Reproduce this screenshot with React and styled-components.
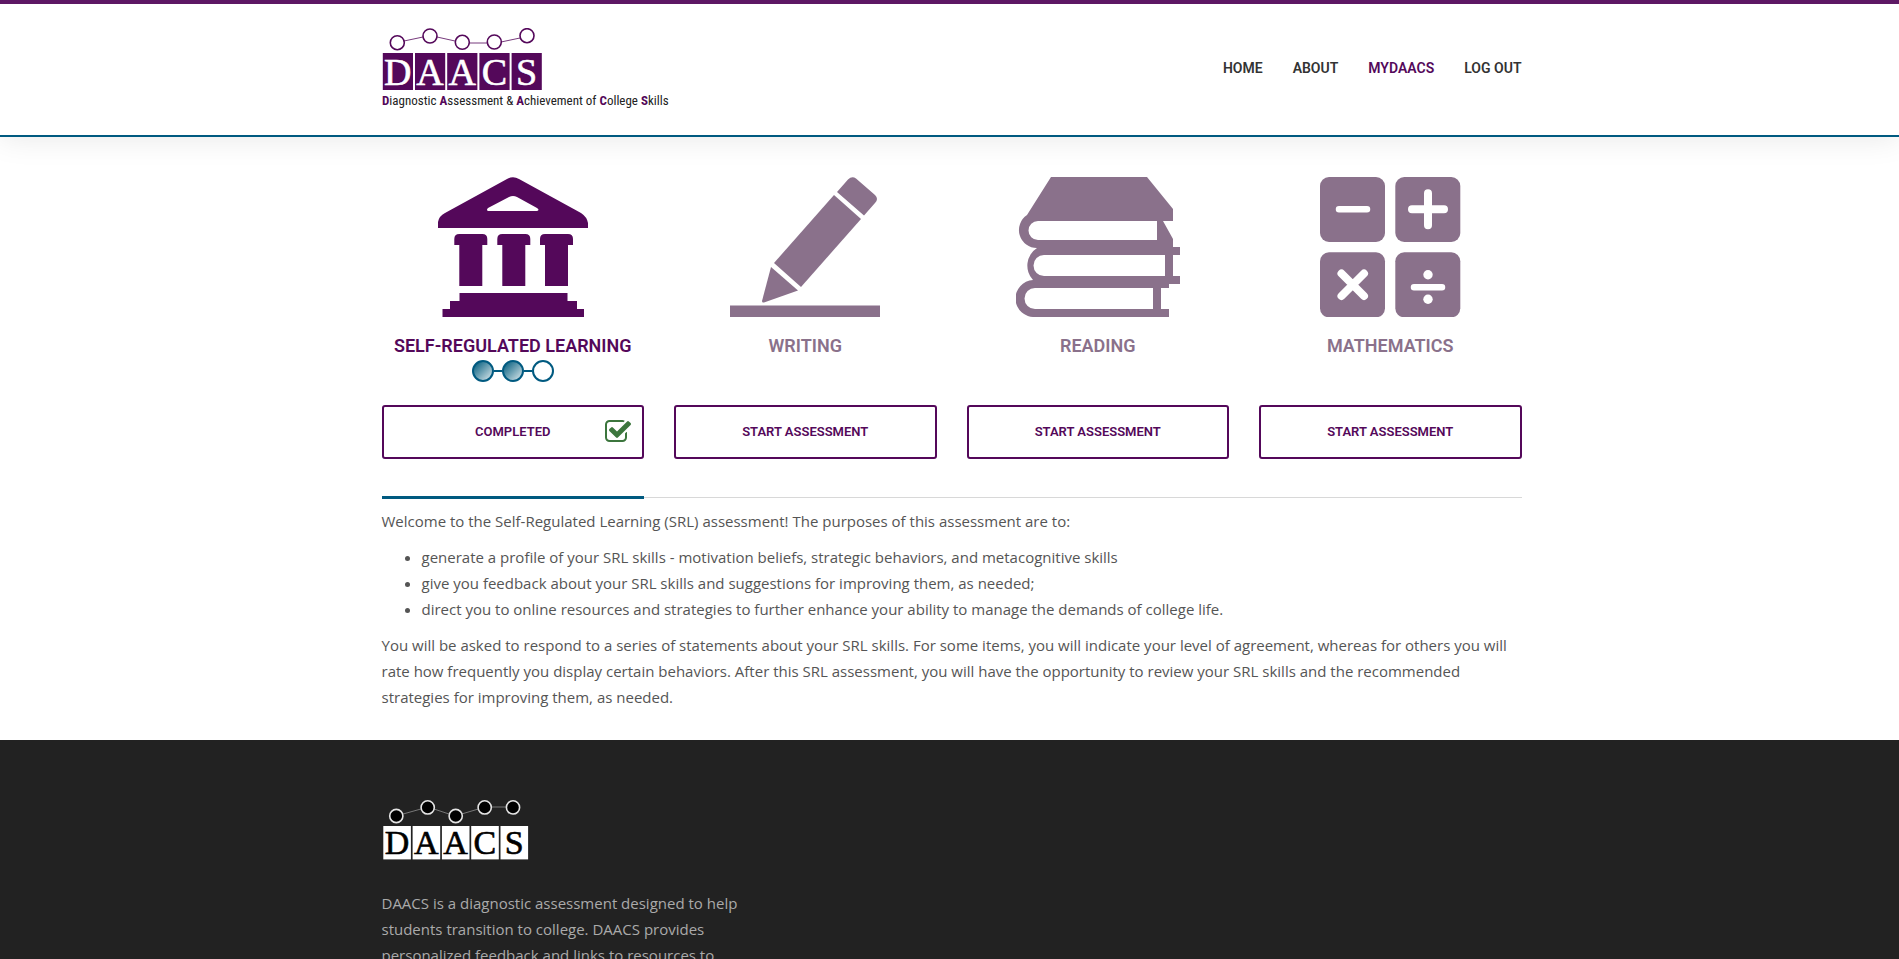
import React from 'react';
import styled, { createGlobalStyle } from 'styled-components';

const purple = '#54085a';
const muted = '#8a718b';
const teal = '#005a80';

const GlobalStyle = createGlobalStyle`
  * { box-sizing: border-box; }
  body {
    margin: 0;
    background: #fff;
    color: #555;
    font: 15px/26px "Open Sans", sans-serif;
  }
`;

const Page = styled.div`
  min-height: 100vh;
  display: flex;
  flex-direction: column;
`;

const Container = styled.div`
  width: 100%;
  max-width: 1140px;
  margin: 0 auto;
`;

const Header = styled.header`
  padding: 24px 10px 0 14px;
  border-top: 4px solid #5d1864;
  border-bottom: 2px solid ${teal};
  box-shadow: 0 0 30px rgba(0, 0, 0, 0.1);
`;

const HeaderRow = styled(Container)`
  display: flex;
  justify-content: space-between;
  align-items: flex-start;
  min-height: 107px;
`;

const HomeLink = styled.a`
  display: block;
  line-height: 0;
`;

const Nav = styled.nav`
  display: flex;
  flex-wrap: wrap;
  gap: 30px;
  padding-top: 27px;
`;

const NavLink = styled.a`
  font: 600 14px/26px Roboto, sans-serif;
  color: ${(p) => (p.$active ? purple : '#333')};
  text-transform: uppercase;
  text-decoration: none;
`;

const Main = styled.main`
  padding: 40px 10px 30px 14px;
`;

const Assessments = styled.div`
  display: grid;
  grid-template-columns: repeat(4, 1fr);
  gap: 30px;
`;

const Card = styled.section`
  display: flex;
  flex-direction: column;
  align-items: center;
  color: ${(p) => (p.$active ? purple : muted)};
`;

const Title = styled.h2`
  margin: 16px 0 0;
  font: 600 18px/26px Roboto, sans-serif;
  text-transform: uppercase;
  white-space: nowrap;
`;

const Progress = styled.div`
  height: 24px;
  padding-top: 1px;
  line-height: 0;
`;

const Action = styled.button`
  display: grid;
  grid-template-columns: 1fr auto 1fr;
  align-items: center;
  width: 100%;
  height: 54px;
  margin-top: 22px;
  padding: 0 10px;
  background: #fff;
  border: 2px solid ${purple};
  border-radius: 3px;
  color: ${purple};
  font: 600 13px/20px Roboto, sans-serif;
  text-transform: uppercase;
  cursor: pointer;
`;

const ActionLabel = styled.span`
  grid-column: 2;
`;

const CheckIcon = styled.svg`
  justify-self: end;
`;

const Track = styled.div`
  display: flex;
  align-items: center;
  height: 3px;
  margin-top: 37px;
`;

const TrackActive = styled.div`
  width: calc((100% - 90px) / 4);
  height: 3px;
  background: ${teal};
`;

const TrackRest = styled.div`
  flex: 1;
  height: 1px;
  background: #d8d8d8;
`;

const Intro = styled.div`
  padding-top: 9px;
`;

const Paragraph = styled.p`
  margin: 0 0 10px;
  &:last-child { margin-bottom: 0; }
`;

const Purposes = styled.ul`
  margin: 0 0 10px;
  padding-left: 40px;
`;

const Footer = styled.footer`
  flex: 1;
  padding: 60px 10px 60px 14px;
  background: #222;
  color: #aaa;
`;

const About = styled.div`
  max-width: 360px;
`;

const FooterText = styled.p`
  margin: 30px 0 0;
`;

const Letter = styled.text`
  font: 38px "Liberation Serif", serif;
  text-anchor: middle;
  stroke-width: 0.6px;
`;

const FooterLetter = styled(Letter)`
  font-size: 34px;
`;

const Tagline = styled.text`
  font: 13px "Liberation Sans Narrow", "Roboto Condensed", sans-serif;
  fill: #222;
`;

const Initial = styled.tspan`
  font-weight: 700;
  fill: ${purple};
`;

const HeaderLogo = () => (
  <svg width="300" height="84" viewBox="0 0 300 84" role="img" aria-label="DAACS">
    <path d="M22 13l19-4M55 9l18 4M87 15h18M119 14l19-4" stroke={purple} strokeWidth="0.8" />
    <g fill="#fff" stroke={purple} strokeWidth="1.6">
      <circle cx="15.3" cy="14.7" r="7" />
      <circle cx="48" cy="8" r="7" />
      <circle cx="80.3" cy="14.3" r="7" />
      <circle cx="112.3" cy="14" r="7" />
      <circle cx="145" cy="7.7" r="7" />
    </g>
    {['D', 'A', 'A', 'C', 'S'].map((c, i) => (
      <g key={i}>
        <rect x={0.8 + i * 32.2} y="25" width="30.2" height="37" fill={purple} />
        <Letter x={15.8 + i * 32.2} y="57" fill="#fff" stroke="#fff">{c}</Letter>
      </g>
    ))}
    <Tagline x="0" y="77">
      <Initial>D</Initial>iagnostic <Initial>A</Initial>ssessment &amp; <Initial>A</Initial>chievement of{' '}
      <Initial>C</Initial>ollege <Initial>S</Initial>kills
    </Tagline>
  </svg>
);

const FooterLogo = () => (
  <svg width="148" height="60" viewBox="0 0 148 60" role="img" aria-label="DAACS">
    <path d="M14 16l32-9 27 9 30-9h28" fill="none" stroke="#777" />
    <g fill="#000" stroke="#e4e4e4" strokeWidth="1.6">
      <circle cx="14.3" cy="16" r="6.6" />
      <circle cx="45.7" cy="7.4" r="6.6" />
      <circle cx="73.7" cy="16" r="6.6" />
      <circle cx="102.7" cy="7.4" r="6.6" />
      <circle cx="131" cy="7.4" r="6.6" />
    </g>
    {['D', 'A', 'A', 'C', 'S'].map((c, i) => (
      <g key={i}>
        <rect x={1.3 + i * 29.3} y="26" width="27.6" height="33.4" fill="#fff" />
        <FooterLetter x={15 + i * 29.3} y="54" fill="#000" stroke="#000">{c}</FooterLetter>
      </g>
    ))}
  </svg>
);

const BuildingArt = () => (
  <svg width="150" height="140" viewBox="0 0 150 140" fill="currentColor" aria-hidden="true">
    <path fillRule="evenodd" d="M0 51V45Q1 39 7 36L69 2Q75 -1.500 81 2L143 36Q149 40 150 46V51ZM50 34H99Q102 33 99 31L79 20Q75 18 71 20L50 31Q48 33 50 34Z" />
    {[16.300, 59.300, 102].map((x) => (
      <path key={x} d={`M${x} 68V62Q${x} 57 ${x + 5} 57H${x + 28}Q${x + 33} 57 ${x + 33} 62V68H${x + 28}V109H${x + 5}V68Z`} />
    ))}
    <path d="M21.500 116H129.500V124H139V132H146V140H4.500V132H12V124H21.500Z" />
  </svg>
);

const PencilArt = () => (
  <svg width="150" height="140" viewBox="0 0 150 140" fill="currentColor" aria-hidden="true">
    <path d="M107 15L118 2.500Q122 -1.500 126 1.500L145 18Q149 22 145 26L134 38.500Z" />
    <path d="M104 18L131 42L71 110L44 86Z" />
    <path d="M41 90L68 113.500L34 125.500Q32 126 32 124Z" />
    <path d="M0 128.500H150V140H0Z" />
  </svg>
);

const BooksArt = () => (
  <svg width="164" height="140" viewBox="0 0 164 140" fill="currentColor" aria-hidden="true">
    <path fillRule="evenodd" d="M35 0H131L157 32V44H147L157 62V70H164V78H157V99H164V107H153V111H145V132H153V140H19A18.500 18.500 0 0 1 17 103A21 21 0 0 1 21 71A18 18 0 0 1 11 38ZM22 44A9.500 9.500 0 0 0 22 63H141V44ZM28 78A10.500 10.500 0 0 0 28 99H149V78ZM19 111A10.500 10.500 0 0 0 19 132H137V111Z" />
  </svg>
);

const MathArt = () => (
  <svg width="141" height="140" viewBox="0 0 141 140" fill="currentColor" aria-hidden="true">
    <rect width="65" height="65" rx="9" />
    <rect x="75.300" width="65" height="65" rx="9" />
    <rect y="75.300" width="65" height="65" rx="9" />
    <rect x="75.300" y="75.300" width="65" height="65" rx="9" />
    <g stroke="#fff" strokeLinecap="round">
      <path d="M19 32.300H47M94 110.300H122" strokeWidth="6.500" />
      <path d="M92 32.300H124M108 16.300V48.300" strokeWidth="8" />
      <path d="M21.500 96.500L44 119M44 96.500L21.500 119" strokeWidth="8" />
    </g>
    <circle cx="108" cy="97.700" r="4.700" fill="#fff" />
    <circle cx="108" cy="122.300" r="4.700" fill="#fff" />
  </svg>
);

const ProgressDots = () => (
  <svg width="82" height="22" viewBox="0 0 82 22" role="img" aria-label="Level 2 of 3">
    <defs>
      <linearGradient id="dot" x1="0" y1="0" x2="1" y2="1">
        <stop offset="0.1" stopColor="#0b6282" />
        <stop offset="1" stopColor="#e8f0f2" />
      </linearGradient>
    </defs>
    <path d="M22 11h8M52 11h8" stroke={teal} strokeWidth="2" />
    <g fill="url(#dot)" stroke={teal} strokeWidth="2">
      <circle cx="11" cy="11" r="10" />
      <circle cx="41" cy="11" r="10" />
      <circle cx="71" cy="11" r="10" fill="#fff" />
    </g>
  </svg>
);

const Check = () => (
  <CheckIcon width="28" height="28" viewBox="0 0 1792 1792" fill="#3c763d" aria-hidden="true">
    <path d="M1472 930v318q0 119-84.500 203.500t-203.500 84.500h-832q-119 0-203.500-84.500t-84.500-203.500v-832q0-119 84.500-203.500t203.500-84.500h832q63 0 117 25 15 7 18 23 3 17-9 29l-49 49q-10 10-23 10-3 0-9-2-23-6-45-6h-832q-66 0-113 47t-47 113v832q0 66 47 113t113 47h832q66 0 113-47t47-113v-254q0-13 9-22l64-64q10-10 23-10 6 0 12 3 20 8 20 29zm231-489l-814 814q-24 24-57 24t-57-24l-430-430q-24-24-24-57t24-57l110-110q24-24 57-24t57 24l263 263 647-647q24-24 57-24t57 24l110 110q24 24 24 57t-24 57z" />
  </CheckIcon>
);

const navItems = ['Home', 'About', 'MyDAACS', 'Log out'];

const assessments = [
  { title: 'Self-Regulated Learning', Art: BuildingArt, done: true },
  { title: 'Writing', Art: PencilArt },
  { title: 'Reading', Art: BooksArt },
  { title: 'Mathematics', Art: MathArt },
];

export default function App() {
  return (
    <Page>
      <GlobalStyle />
      <Header>
        <HeaderRow>
          <HomeLink href="#home"><HeaderLogo /></HomeLink>
          <Nav>
            {navItems.map((item) => (
              <NavLink key={item} href="#" $active={item === 'MyDAACS'}>{item}</NavLink>
            ))}
          </Nav>
        </HeaderRow>
      </Header>
      <Main>
        <Container>
          <Assessments>
            {assessments.map(({ title, Art, done }) => (
              <Card key={title} $active={done}>
                <Art />
                <Title>{title}</Title>
                <Progress>{done && <ProgressDots />}</Progress>
                <Action type="button">
                  <ActionLabel>{done ? 'Completed' : 'Start Assessment'}</ActionLabel>
                  {done && <Check />}
                </Action>
              </Card>
            ))}
          </Assessments>
          <Track>
            <TrackActive />
            <TrackRest />
          </Track>
          <Intro>
            <Paragraph>Welcome to the Self-Regulated Learning (SRL) assessment! The purposes of this assessment are to:</Paragraph>
            <Purposes>
              <li>generate a profile of your SRL skills - motivation beliefs, strategic behaviors, and metacognitive skills</li>
              <li>give you feedback about your SRL skills and suggestions for improving them, as needed;</li>
              <li>direct you to online resources and strategies to further enhance your ability to manage the demands of college life.</li>
            </Purposes>
            <Paragraph>
              You will be asked to respond to a series of statements about your SRL skills. For some items, you will indicate
              your level of agreement, whereas for others you will rate how frequently you display certain behaviors. After
              this SRL assessment, you will have the opportunity to review your SRL skills and the recommended strategies for
              improving them, as needed.
            </Paragraph>
          </Intro>
        </Container>
      </Main>
      <Footer>
        <Container>
          <About>
            <HomeLink href="#home"><FooterLogo /></HomeLink>
            <FooterText>
              DAACS is a diagnostic assessment designed to help students transition to college. DAACS provides personalized
              feedback and links to resources to
            </FooterText>
          </About>
        </Container>
      </Footer>
    </Page>
  );
}
